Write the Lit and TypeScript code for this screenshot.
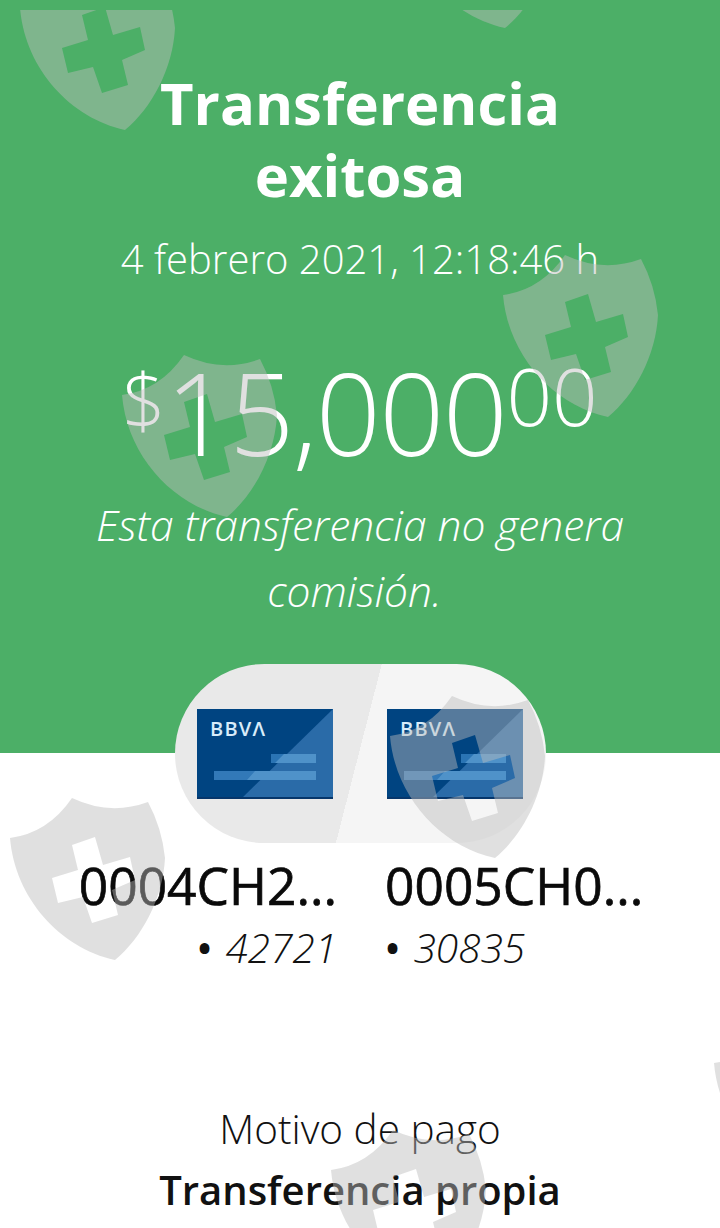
import { LitElement, html, css, svg } from "lit";
import { customElement } from "lit/decorators.js";

const SHIELDS = [
  [20, -32], [400, -134], [503, 255], [122, 355], [390, 696], [10, 798], [331, 1130], [714, 1023],
];

const shieldPath = svg`<path fill-rule="evenodd" d="M0 40 Q38 35 62 0 Q100 18 138 4 Q152 30 155 60 C153 100 132 140 105 162 C50 150 5 100 0 40 Z
M62 47 L85 39 L93 67 L120 59 L125 82 L102 92 L108 117 L82 125 L73 99 L48 105 L42 80 L68 72 Z"/>`;

const card = svg`<svg class="card" viewBox="0 0 136 90" width="136" height="90">
  <rect width="136" height="90" fill="#004481"/>
  <path d="M136 0 V90 H44 Z" fill="#2a6ba8"/>
  <rect x="74" y="45" width="45" height="9" fill="#2a74b4"/>
  <rect x="17" y="62" width="102" height="9" fill="#3279b8"/>
  <path d="M87 45 H119 V54 H78 Z M58 62 H119 V71 H50 Z" fill="#4f92c9"/>
  <rect y="88" width="136" height="2" fill="#06366b"/>
  <text x="13" y="27" class="logo">BBVΛ</text>
</svg>`;

@customElement("app-root")
export class AppRoot extends LitElement {
  static styles = css`
    :host {
      display: block;
      position: relative;
      width: 720px;
      height: 1228px;
      overflow: hidden;
      background: #fff;
      font-family: "Open Sans", "Liberation Sans", sans-serif;
      color: #111;
    }
    .green {
      background: #4caf67;
      color: #fff;
      height: 753px;
      box-sizing: border-box;
      padding-top: 67px;
      text-align: center;
    }
    h1 {
      margin: 0;
      font-size: 58px;
      line-height: 72px;
      font-weight: 700;
    }
    .date {
      margin-top: 24px;
      font-size: 40px;
      line-height: 48px;
      font-weight: 300;
    }
    .amount {
      margin-top: 61px;
      display: flex;
      justify-content: center;
      align-items: flex-start;
      font-weight: 300;
      height: 126px;
      font-size: 114px;
      line-height: 135px;
    }
    .digits { letter-spacing: -1.5px; }
    .dollar {
      font-size: 76px;
      line-height: 80px;
      margin-top: 15px;
    }
    .cents {
      font-size: 80px;
      line-height: 80px;
      margin-top: 11px;
    }
    .note {
      margin: 22px 0 0;
      font-size: 42.5px;
      line-height: 66px;
      font-style: italic;
      font-weight: 300;
    }
    .pill {
      position: relative;
      width: 371px;
      height: 179px;
      margin: -89px 0 0 175px;
      border-radius: 90px;
      background: linear-gradient(104.4deg, #e9e9e9 49.6%, #f5f5f5 49.6%);
      display: flex;
      align-items: center;
      gap: 54px;
      padding: 0 22px;
      box-sizing: border-box;
    }
    .card { display: block; }
    .logo {
      font-family: "Open Sans", sans-serif;
      font-size: 20px;
      font-weight: 600;
      fill: #d8ecfa;
      letter-spacing: 1.2px;
    }
    .accounts {
      display: grid;
      grid-template-columns: 361px 1fr;
      margin-top: 14px;
    }
    .acc { white-space: nowrap; }
    .acc.left { text-align: right; padding-right: 24px; }
    .acc.right { padding-left: 24px; }
    .name {
      font-size: 51.5px;
      line-height: 56px;
      font-weight: 400;
      -webkit-text-stroke: 0.7px #0a0a0a;
      color: #0a0a0a;
    }
    .num {
      font-size: 40.5px;
      line-height: 54px;
      font-style: italic;
      font-weight: 300;
      margin-top: 8px;
    }
    .bullet {
      display: inline-block;
      font-size: 40px;
      line-height: 30px;
      font-style: normal;
      font-weight: 600;
      margin-right: 3px;
    }
    .motivo {
      margin-top: 126px;
      text-align: center;
    }
    .m1 { font-size: 40.5px; line-height: 56px; font-weight: 300; }
    .m2 { font-size: 40px; line-height: 56px; font-weight: 600; margin-top: 5px; }
    .overlay {
      position: absolute;
      inset: 0;
      pointer-events: none;
      clip-path: inset(10px 0 0 0);
    }
    .shield {
      position: absolute;
      width: 156px;
      height: 162px;
      fill: rgba(188, 188, 188, 0.46);
    }
  `;

  render() {
    return html`
      <div class="green">
        <h1>Transferencia<br />exitosa</h1>
        <div class="date">4 febrero 2021, 12:18:46 h</div>
        <div class="amount">
          <span class="dollar">$</span><span class="digits">15,000</span><span class="cents">00</span>
        </div>
        <p class="note">Esta transferencia no genera<br />comisión.&nbsp;</p>
      </div>
      <div class="pill">${card}${card}</div>
      <div class="accounts">
        <div class="acc left">
          <div class="name">0004CH2...</div>
          <div class="num"><span class="bullet">•</span> 42721</div>
        </div>
        <div class="acc right">
          <div class="name">0005CH0...</div>
          <div class="num"><span class="bullet">•</span> 30835</div>
        </div>
      </div>
      <div class="motivo">
        <div class="m1">Motivo de pago</div>
        <div class="m2">Transferencia propia</div>
      </div>
      <div class="overlay">
        ${SHIELDS.map(
          ([x, y]) => html`<svg class="shield" viewBox="0 0 156 162" style="left:${x}px;top:${y}px">${shieldPath}</svg>`
        )}
      </div>
    `;
  }
}
